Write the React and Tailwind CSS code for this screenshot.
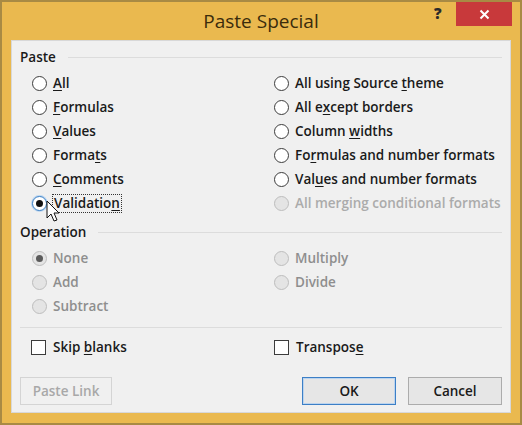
import React from 'react';

const Radio = ({ checked, disabled, focus }) => (
  <span
    className={`relative flex items-center justify-center size-[15px] rounded-full border ${
      disabled ? 'border-[#bdbdbd] bg-[#e4e4e4]' : focus ? 'border-[#3b7fc4] bg-white shadow-[0_0_0_1px_#bcd6f0]' : 'border-[#3c3c3c] bg-white'
    }`}
  >
    {checked && <span className={`size-[7px] rounded-full ${disabled ? 'bg-[#5a5a5a]' : 'bg-[#111]'}`} />}
  </span>
);

const Label = ({ text, u }) => {
  if (u == null) return <span>{text}</span>;
  return (
    <span>
      {text.slice(0, u)}
      <span className="underline underline-offset-2">{text[u]}</span>
      {text.slice(u + 1)}
    </span>
  );
};

const Option = ({ text, u, checked, disabled, focus, faint }) => (
  <div className={`h-6 flex items-center gap-[6px] ${disabled ? (faint ? 'text-[#ababab]' : 'text-[#8e8e8e]') : 'text-[#1a1a1a]'}`}>
    <Radio checked={checked} disabled={disabled} focus={focus} />
    {focus ? (
      <span className="relative outline outline-1 outline-dotted outline-[#333] px-[1px] leading-[17px]">
        <Label text={text} u={u} />
      </span>
    ) : (
      <Label text={text} u={u} />
    )}
  </div>
);

const Group = ({ title }) => (
  <div className="h-[18px] flex items-center gap-3 text-[#1a1a1a]">
    <span>{title}</span>
    <div className="flex-1 h-px bg-[#dcdcdc] mt-px" />
  </div>
);

const Check = ({ text, u }) => (
  <div className="h-6 flex items-center gap-[7px] text-[#1a1a1a]">
    <span className="size-[15px] border border-[#3c3c3c] bg-white" />
    <Label text={text} u={u} />
  </div>
);

export default function App() {
  return (
    <div
      className="w-[522px] h-[425px] bg-[#eab94f] border-2 border-[#a88a44] flex flex-col overflow-hidden"
      style={{ fontFamily: '"Open Sans", "Noto Sans", sans-serif' }}
    >
      <div className="h-[38px] relative flex items-center justify-center shrink-0">
        <span className="text-[19px] text-[#3b2c0c] leading-none">Paste Special</span>
        <span className="absolute left-[432px] top-0 text-[15px] font-extrabold text-[#2a2a2a]">?</span>
        <div className="absolute right-[8px] top-0 w-[56px] h-[24px] bg-[#c8393b] flex items-center justify-center">
          <svg width="11" height="11" viewBox="0 0 11 11">
            <path d="M1.5 1.5 L9.5 9.5 M9.5 1.5 L1.5 9.5" stroke="#fff" strokeWidth="2" />
          </svg>
        </div>
      </div>
      <div className="mx-[9px] mb-[10px] flex-1 bg-[#f0f0f0] border border-[#d8d8d8] text-[13.5px] font-semibold px-[8px] pt-[7px] relative">
        <Group title="Paste" />
        <div className="grid grid-cols-[254px_1fr] mt-[5px] pl-[12px]">
          <div className="flex flex-col">
            <Option text="All" u={0} />
            <Option text="Formulas" u={0} />
            <Option text="Values" u={0} />
            <Option text="Formats" u={5} />
            <Option text="Comments" u={0} />
            <Option text="Validation" u={9} checked focus />
          </div>
          <div className="flex flex-col -ml-[12px]">
            <Option text="All using Source theme" u={17} />
            <Option text="All except borders" u={5} />
            <Option text="Column widths" u={7} />
            <Option text="Formulas and number formats" u={2} />
            <Option text="Values and number formats" u={3} />
            <Option text="All merging conditional formats" disabled faint />
          </div>
        </div>
        <div className="mt-[8px]">
          <Group title="Operation" />
        </div>
        <div className="grid grid-cols-[254px_1fr] mt-[5px] pl-[12px]">
          <div className="flex flex-col">
            <Option text="None" checked disabled />
            <Option text="Add" disabled />
            <Option text="Subtract" disabled />
          </div>
          <div className="flex flex-col -ml-[12px]">
            <Option text="Multiply" disabled />
            <Option text="Divide" disabled />
          </div>
        </div>
        <div className="h-px bg-[#dcdcdc] mt-[9px]" />
        <div className="grid grid-cols-[254px_1fr] mt-[7px] pl-[11px]">
          <Check text="Skip blanks" u={5} />
          <div className="-ml-[11px]">
            <Check text="Transpose" u={8} />
          </div>
        </div>
        <div className="flex items-center mt-[18px]">
          <button className="w-[92px] h-[28px] border border-[#d4d4d4] bg-[#f0f0f0] text-[#a8a8a8]">Paste Link</button>
          <div className="flex-1" />
          <button className="w-[94px] h-[28px] border border-[#3c7fc6] bg-[#e6e6e6] text-[#1a1a1a] shadow-[inset_0_0_0_1px_#bcd4ee]">OK</button>
          <button className="w-[94px] h-[28px] border border-[#acacac] bg-[#e6e6e6] text-[#1a1a1a] ml-[12px]">Cancel</button>
        </div>
        <svg className="absolute left-[34px] top-[159px]" width="16" height="24" viewBox="0 0 16 24">
          <path d="M1 1 L1 18 L5 14 L8 21 L11 20 L8 13 L13 13 Z" fill="#fff" stroke="#111" strokeWidth="1" strokeLinejoin="round" />
        </svg>
      </div>
    </div>
  );
}
